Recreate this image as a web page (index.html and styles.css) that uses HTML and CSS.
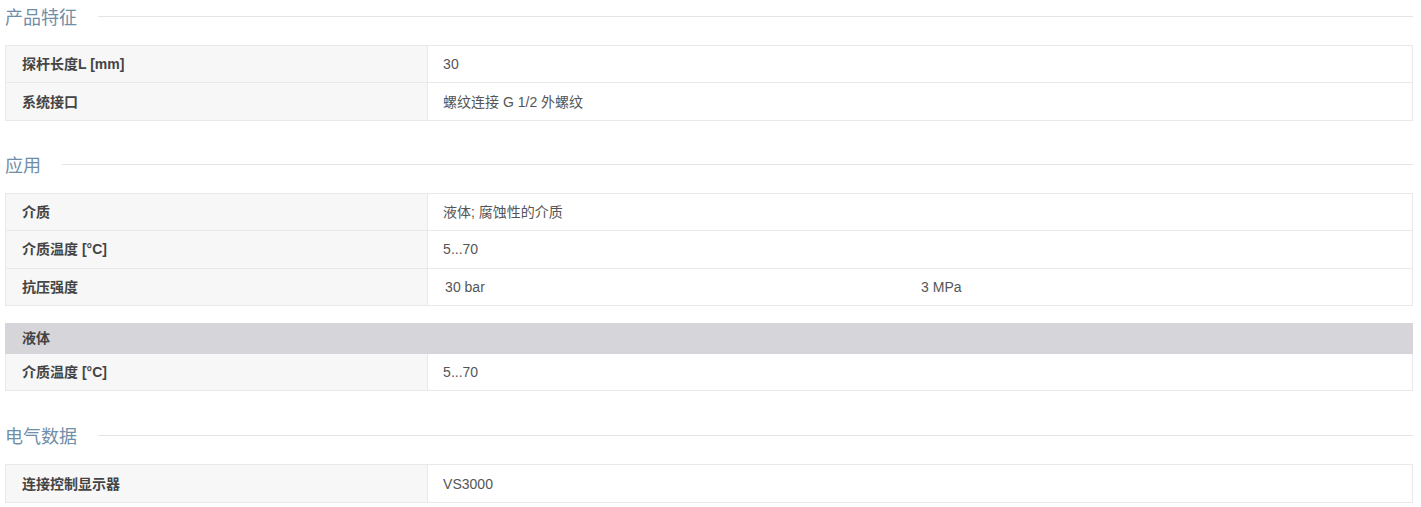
FILE: index.html
```html
<!DOCTYPE html>
<html lang="zh">
<head>
<meta charset="utf-8">
<title>产品参数</title>
<link rel="stylesheet" href="styles.css">
</head>
<body>
<div class="page">
  <section class="section">
    <h2 class="heading"><span class="heading-text">产品特征</span><span class="heading-line"></span></h2>
    <table class="spec">
      <colgroup><col class="c-label"><col class="c-val"></colgroup>
      <tr><th>探杆长度L [mm]</th><td>30</td></tr>
      <tr><th>系统接口</th><td>螺纹连接 G 1/2 外螺纹</td></tr>
    </table>
  </section>

  <section class="section">
    <h2 class="heading"><span class="heading-text">应用</span><span class="heading-line"></span></h2>
    <table class="spec">
      <colgroup><col class="c-label"><col class="c-val"></colgroup>
      <tr><th>介质</th><td>液体; 腐蚀性的介质</td></tr>
      <tr><th>介质温度 [°C]</th><td>5...70</td></tr>
      <tr><th>抗压强度</th><td><div class="split"><span>30 bar</span><span>3 MPa</span></div></td></tr>
    </table>
    <table class="spec spec-group">
      <colgroup><col class="c-label"><col class="c-val"></colgroup>
      <tr class="group-head"><th colspan="2">液体</th></tr>
      <tr><th>介质温度 [°C]</th><td>5...70</td></tr>
    </table>
  </section>

  <section class="section section-last">
    <h2 class="heading"><span class="heading-text">电气数据</span><span class="heading-line"></span></h2>
    <table class="spec">
      <colgroup><col class="c-label"><col class="c-val"></colgroup>
      <tr><th>连接控制显示器</th><td>VS3000</td></tr>
    </table>
  </section>
</div>
</body>
</html>
```

FILE: styles.css
```css
html, body {
  margin: 0;
  padding: 0;
  background: #ffffff;
}

body {
  font-family: "Liberation Sans", Arial, "Noto Sans CJK SC", sans-serif;
  font-size: 14px;
  color: #555555;
}

.page {
  padding: 4px 8px 0 5px;
}

.section + .section {
  margin-top: 31px;
}

.section + .section-last {
  margin-top: 32px;
}

.heading {
  display: flex;
  align-items: flex-start;
  gap: 21px;
  height: 24px;
  margin: 0 0 17px 0;
  font-weight: normal;
  font-size: 18px;
  line-height: 24px;
  font-family: "Liberation Sans", "Noto Sans CJK SC", sans-serif;
  color: #6f8ea8;
}

.heading-text {
  flex: none;
  margin-top: 2px;
}

.heading-line {
  flex: 1;
  height: 1px;
  background: #e4e4e4;
  margin-top: 12px;
}

.spec {
  width: 100%;
  border-collapse: collapse;
  table-layout: fixed;
  border: 1px solid #e9e9e9;
}

.spec + .spec {
  margin-top: 17px;
}

.c-label {
  width: 30%;
}

.spec th,
.spec td {
  border: 1px solid #e9e9e9;
  height: 36.4px;
  padding: 0 15px 0 16px;
  line-height: 20px;
  text-align: left;
  vertical-align: middle;
  font-size: 14px;
}

.spec th {
  background: #f7f7f7;
  color: #444444;
  font-weight: bold;
}

.spec td {
  background: #ffffff;
  color: #555555;
  padding-left: 15px;
}

.split {
  display: flex;
  padding-left: 2px;
}

.split span {
  flex: 1;
}

.group-head th {
  background: #d6d5da;
  height: 29px;
  border-color: #d6d5da;
  color: #444444;
}
```
